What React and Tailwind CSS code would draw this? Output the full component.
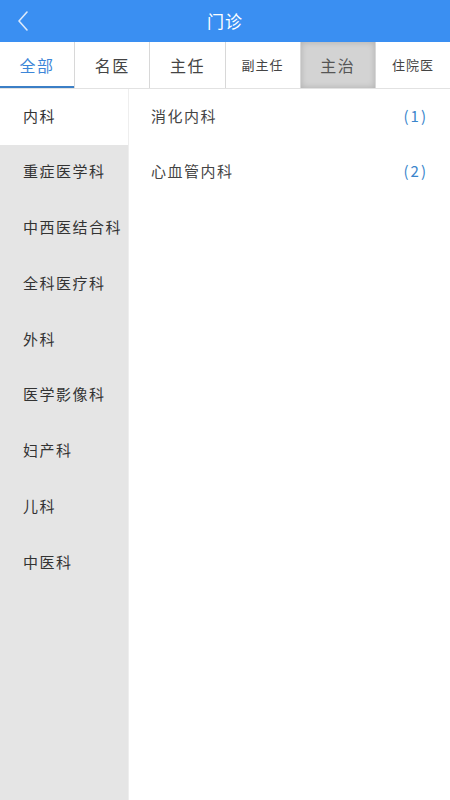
import { useState } from "react";

const tabs = [
  { label: "全部", small: false },
  { label: "名医", small: false },
  { label: "主任", small: false },
  { label: "副主任", small: true },
  { label: "主治", small: false },
  { label: "住院医", small: true },
];

const depts = [
  "内科",
  "重症医学科",
  "中西医结合科",
  "全科医疗科",
  "外科",
  "医学影像科",
  "妇产科",
  "儿科",
  "中医科",
];

const subDepts = [
  { name: "消化内科", count: 1 },
  { name: "心血管内科", count: 2 },
];

export default function App() {
  const [activeTab, setActiveTab] = useState(0);
  const [activeDept, setActiveDept] = useState(0);

  return (
    <div
      className="flex h-[800px] w-[450px] flex-col overflow-hidden bg-white"
      style={{ fontFamily: '"Noto Sans CJK SC", "Noto Sans", sans-serif' }}
    >
      {/* Header */}
      <div className="relative flex h-[42px] shrink-0 items-center justify-center bg-[#3a8ff2]">
        <button className="absolute left-[16px] top-[10px] text-white">
          <svg width="14" height="22" viewBox="0 0 14 22" fill="none" stroke="#dbe9fb" strokeWidth="1.6" strokeLinecap="round" strokeLinejoin="round">
            <polyline points="11,2 3,11 11,20"></polyline>
          </svg>
        </button>
        <h1 className="text-[17px] font-normal tracking-[1px] text-white">门诊</h1>
      </div>

      {/* Tabs */}
      <div className="flex h-[47px] shrink-0 border-b border-[#e2e2e2]">
        {tabs.map((t, i) => (
          <button
            key={t.label}
            onClick={() => setActiveTab(i)}
            className={`relative flex flex-1 items-center justify-center ${
              i < tabs.length - 1 ? "border-r border-[#d8d8d8]" : ""
            } ${i === 4 ? "bg-[#d3d3d3] shadow-[inset_0_0_6px_rgba(0,0,0,0.18)]" : ""} ${
              t.small ? "text-[13px] tracking-[1px]" : "text-[16px] tracking-[1.5px]"
            } ${i === activeTab ? "text-[#3d86d8]" : i === 4 ? "text-[#555]" : "text-[#444]"}`}
          >
            {t.label}
            {i === activeTab && (
              <span className="absolute bottom-0 left-0 right-0 h-[2px] bg-[#3b7fc6]"></span>
            )}
          </button>
        ))}
      </div>

      {/* Body */}
      <div className="flex flex-1">
        <div className="w-[128px] shrink-0 bg-[#e5e5e5]">
          {depts.map((d, i) => (
            <div
              key={d}
              onClick={() => setActiveDept(i)}
              className={`flex h-[55.75px] items-center pb-[2px] pl-[23px] text-[15px] tracking-[1.5px] text-[#333] ${
                i === activeDept ? "bg-white" : ""
              }`}
            >
              {d}
            </div>
          ))}
        </div>
        <div className="flex-1 border-l border-[#eeeeee]">
          {subDepts.map((s) => (
            <div key={s.name} className="flex h-[55.75px] items-center justify-between pb-[2px] pl-[22px] pr-[22px]">
              <span className="text-[15px] tracking-[1.5px] text-[#444]">{s.name}</span>
              <span className="text-[15px] tracking-[2px] text-[#3a85cc]">({s.count})</span>
            </div>
          ))}
        </div>
      </div>
    </div>
  );
}
